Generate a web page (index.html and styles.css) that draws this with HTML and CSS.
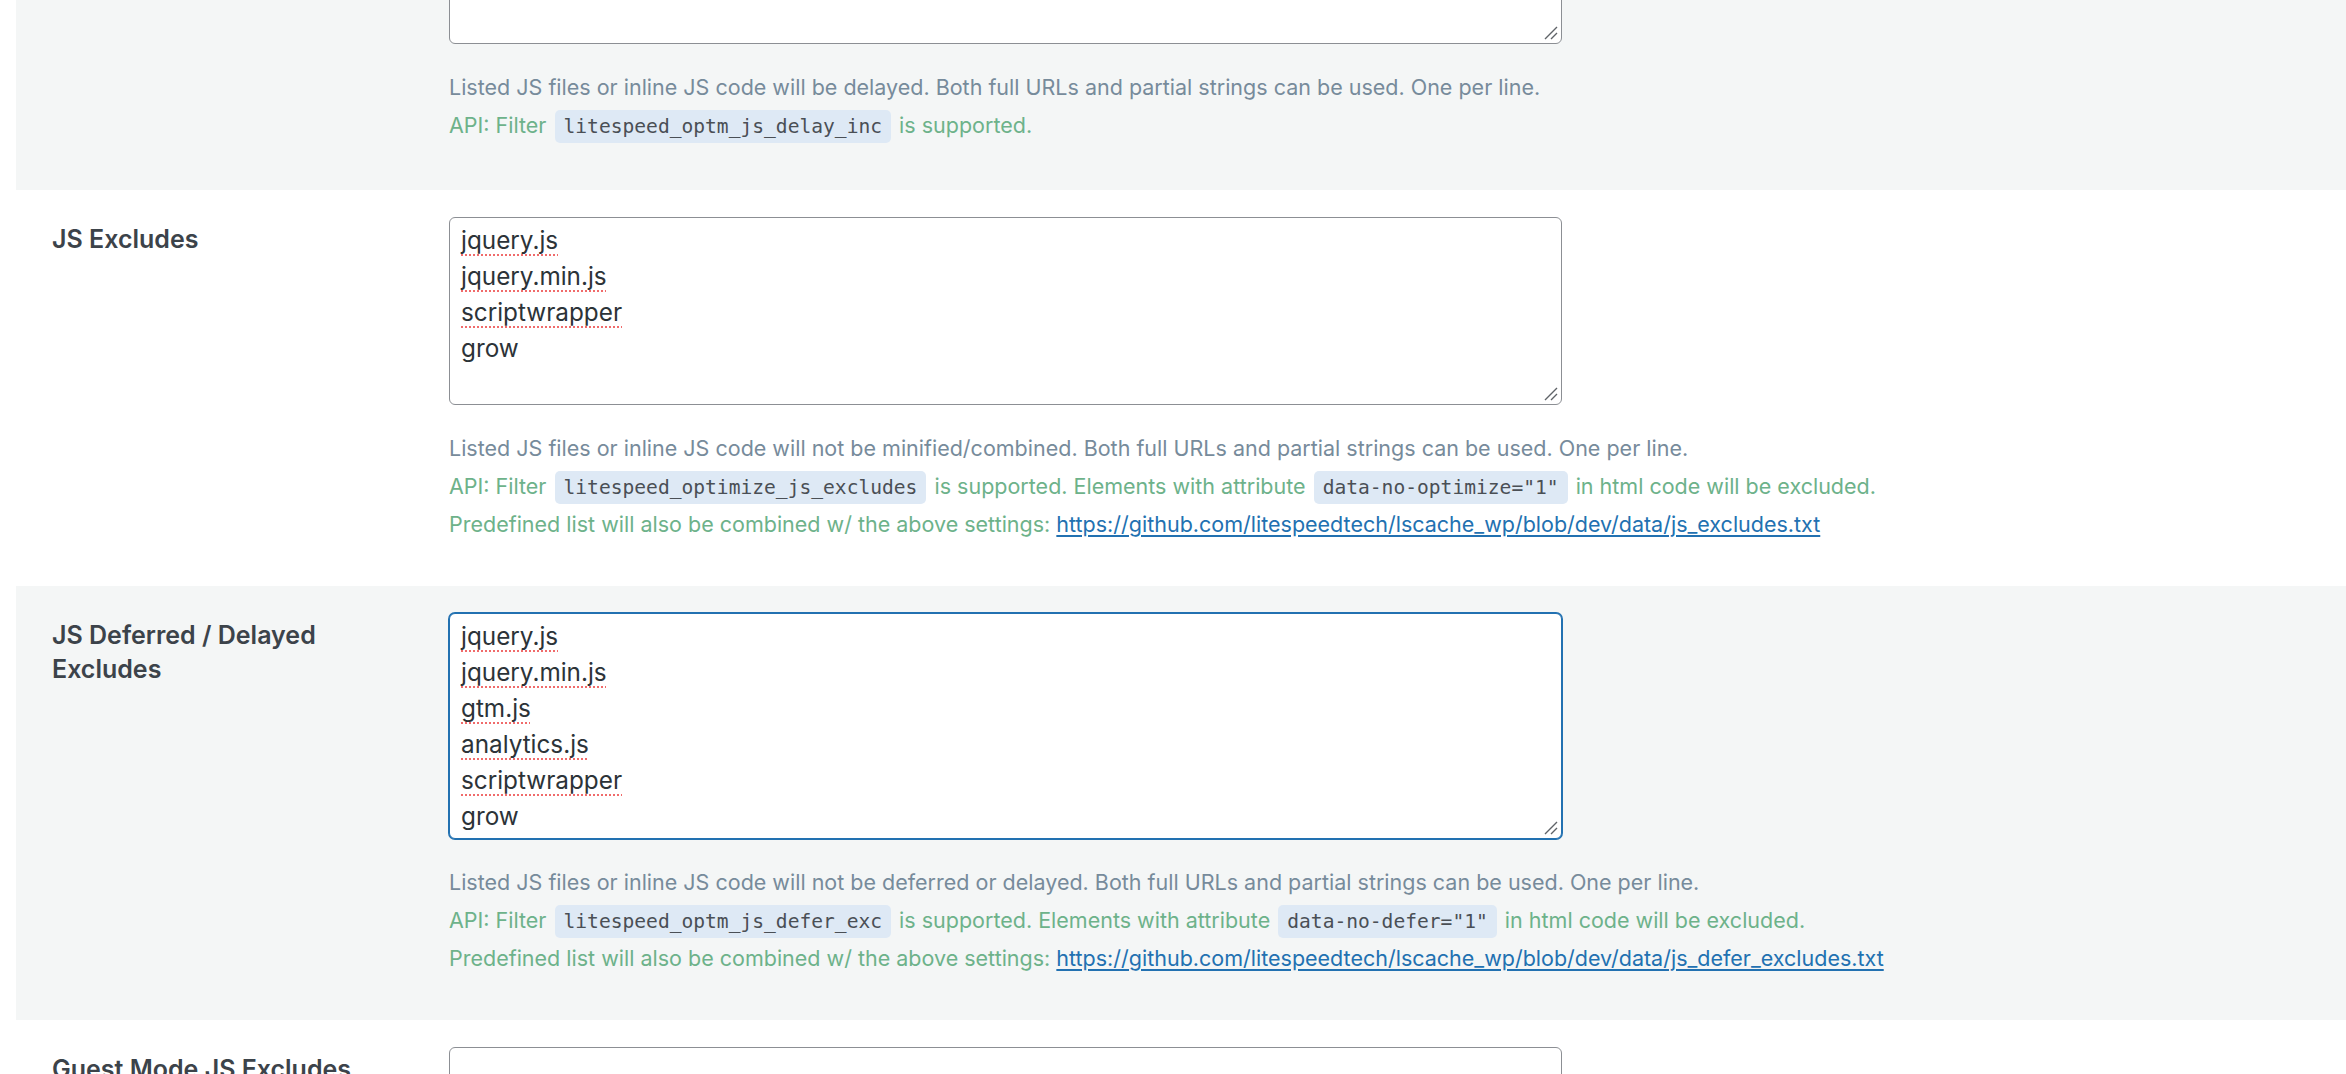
FILE: index.html
```html
<!DOCTYPE html>
<html lang="en">
<head>
<meta charset="utf-8">
<title>LiteSpeed JS Settings</title>
<link rel="stylesheet" href="styles.css">
</head>
<body>
<div class="page">
  <div class="settings">

    <section class="row alt first">
      <div class="label"></div>
      <div class="field">
        <div class="textbox tall-5">
          <svg class="grip" viewBox="0 0 14 14" width="14" height="14"><path d="M1 13 L13 1 M7 13 L13 7" stroke="#5f6368" stroke-width="1.4" fill="none"/></svg>
        </div>
        <div class="desc">
          <div class="note">Listed JS files or inline JS code will be delayed. Both full URLs and partial strings can be used. One per line.</div>
          <div class="ok">API: Filter <code>litespeed_optm_js_delay_inc</code> is supported.</div>
        </div>
      </div>
    </section>

    <section class="row">
      <div class="label">JS Excludes</div>
      <div class="field">
        <div class="textbox tall-5">
          <div><span class="sp">jquery.js</span></div>
          <div><span class="sp">jquery.min.js</span></div>
          <div><span class="sp">scriptwrapper</span></div>
          <div>grow</div>
          <svg class="grip" viewBox="0 0 14 14" width="14" height="14"><path d="M1 13 L13 1 M7 13 L13 7" stroke="#5f6368" stroke-width="1.4" fill="none"/></svg>
        </div>
        <div class="desc">
          <div class="note">Listed JS files or inline JS code will not be minified/combined. Both full URLs and partial strings can be used. One per line.</div>
          <div class="ok">API: Filter <code>litespeed_optimize_js_excludes</code> is supported. Elements with attribute <code>data-no-optimize="1"</code> in html code will be excluded.</div>
          <div class="ok">Predefined list will also be combined w/ the above settings: <a href="#">https://github.com/litespeedtech/lscache_wp/blob/dev/data/js_excludes.txt</a></div>
        </div>
      </div>
    </section>

    <section class="row alt">
      <div class="label">JS Deferred / Delayed<br>Excludes</div>
      <div class="field">
        <div class="textbox tall-6 focus">
          <div><span class="sp">jquery.js</span></div>
          <div><span class="sp">jquery.min.js</span></div>
          <div><span class="sp">gtm.js</span></div>
          <div><span class="sp">analytics.js</span></div>
          <div><span class="sp">scriptwrapper</span></div>
          <div>grow</div>
          <svg class="grip" viewBox="0 0 14 14" width="14" height="14"><path d="M1 13 L13 1 M7 13 L13 7" stroke="#5f6368" stroke-width="1.4" fill="none"/></svg>
        </div>
        <div class="desc">
          <div class="note">Listed JS files or inline JS code will not be deferred or delayed. Both full URLs and partial strings can be used. One per line.</div>
          <div class="ok">API: Filter <code>litespeed_optm_js_defer_exc</code> is supported. Elements with attribute <code>data-no-defer="1"</code> in html code will be excluded.</div>
          <div class="ok">Predefined list will also be combined w/ the above settings: <a href="#">https://github.com/litespeedtech/lscache_wp/blob/dev/data/js_defer_excludes.txt</a></div>
        </div>
      </div>
    </section>

    <section class="row">
      <div class="label">Guest Mode JS Excludes</div>
      <div class="field">
        <div class="textbox tall-5"></div>
      </div>
    </section>

  </div>
</div>
</body>
</html>
```

FILE: styles.css
```css
html, body {
  margin: 0;
  padding: 0;
  background: #ffffff;
  overflow: hidden;
}

body {
  font-family: "Inter", "Noto Sans", sans-serif;
  color: #3c434a;
}

.page {
  width: 2346px;
  height: 1074px;
  overflow: hidden;
}

.settings {
  margin-left: 16px;
  margin-top: -171px;
}

.row {
  display: grid;
  grid-template-columns: 397px 1fr;
  padding: 27px 0 43px 36px;
}

.row.first {
  padding-bottom: 46px;
}

.row.alt {
  background: #f4f6f6;
}

.label {
  margin-top: 5px;
  font-size: 25px;
  line-height: 34px;
  font-weight: 600;
  color: #3c434a;
  white-space: nowrap;
}

.field {
  min-width: 0;
}

.textbox {
  position: relative;
  box-sizing: border-box;
  width: 1113px;
  background: #ffffff;
  border: 1px solid #8c8f94;
  border-radius: 6px;
  padding: 4px 11px 2px;
  font-size: 24.3px;
  line-height: 36px;
  color: #2c3338;
}

.textbox.tall-5 {
  height: 188px;
}

.textbox.tall-6 {
  height: 226px;
}

.textbox.focus {
  border-color: #2271b1;
  box-shadow: 0 0 0 1px #2271b1;
}

.sp {
  text-decoration: underline dotted #f06b6b;
  text-decoration-thickness: 2px;
  text-underline-offset: 5px;
}

.grip {
  position: absolute;
  right: 3px;
  bottom: 3px;
}

.desc {
  margin-top: 24px;
  font-size: 21.5px;
  line-height: 38px;
  white-space: nowrap;
}

.note {
  color: #778b9b;
}

.ok {
  color: #6db28a;
}

code {
  font-family: "DejaVu Sans Mono", "Liberation Mono", monospace;
  font-size: 19.6px;
  line-height: 25px;
  color: #4a4f55;
  background: #dee9f5;
  border-radius: 5px;
  padding: 5px 9px;
  margin: 0 2px;
}

a {
  color: #2271b1;
  text-decoration: underline;
  text-underline-offset: 3px;
}
```
